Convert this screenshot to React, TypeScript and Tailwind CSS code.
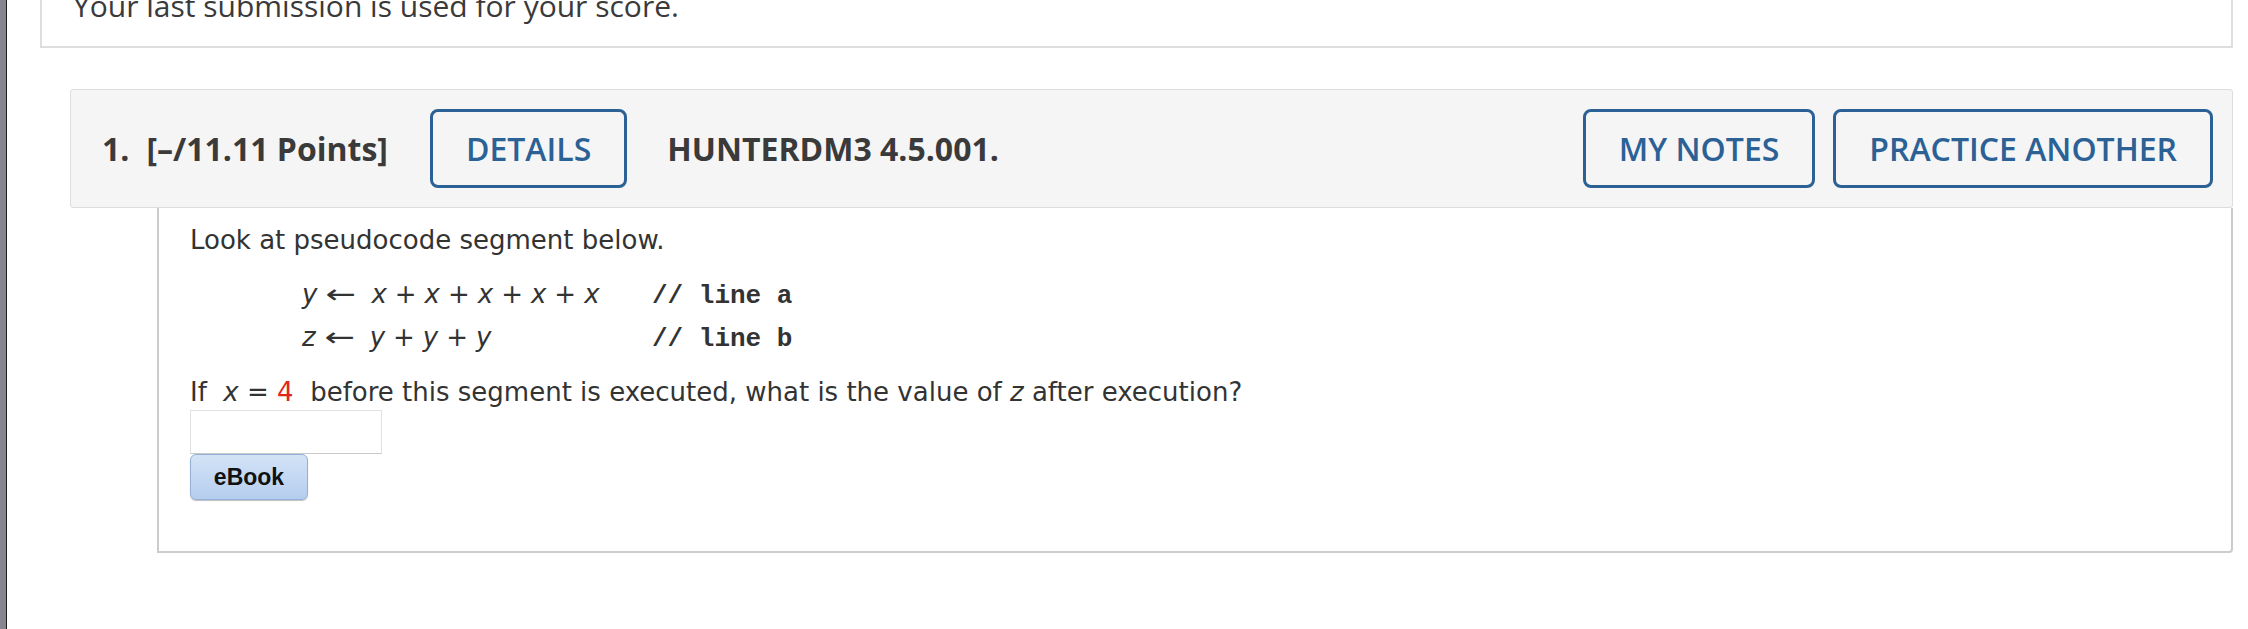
const sans = "font-['Open_Sans',sans-serif]"
const verdana = "font-['DejaVu_Sans','Verdana',sans-serif]"

function Var({ children }: { children: string }) {
  return <span className="italic">{children}</span>
}

function Op({ children }: { children: string }) {
  return <span className="mx-[8px]">{children}</span>
}

function Arrow() {
  return <span className="inline-block w-[34px] ml-[7px] mr-[13px] text-center scale-x-[1.4]">←</span>
}

function HeaderButton({ label }: { label: string }) {
  return (
    <button
      type="button"
      className="h-[79px] px-[33px] border-[3px] border-[#2b6195] rounded-[8px] text-[32px] font-semibold text-[#2b6195]"
    >
      {label}
    </button>
  )
}

export default function App() {
  return (
    <div className="flex min-h-[629px] bg-white overflow-hidden">
      <div className="w-[7px] shrink-0 bg-[#86868e] border-r border-[#1e1e1e]" />
      <div className="flex-1 min-w-0">
        <div className={`mt-[-30px] ml-[33px] mr-[15px] h-[78px] border-2 border-[#dedede] pl-[31px] pt-[14px] ${sans}`}>
          <p className="text-[30px] leading-[40px] text-[#3a3a3a]">Your last submission is used for your score.</p>
        </div>

        <div
          className={`mt-[41px] ml-[63px] mr-[15px] flex items-center bg-[#f5f5f5] border border-[#dddddd] rounded-[3px] pl-[31px] pr-[19px] py-[19px] ${sans}`}
        >
          <span className="text-[32px] font-bold text-[#3a3a3a]">1.</span>
          <span className="ml-[17px] text-[32px] font-bold text-[#3a3a3a]">[–/11.11 Points]</span>
          <div className="ml-[42px]">
            <HeaderButton label="DETAILS" />
          </div>
          <span className="ml-[40px] text-[32px] font-bold text-[#3a3a3a]">HUNTERDM3 4.5.001.</span>
          <div className="ml-auto flex gap-[18px]">
            <HeaderButton label="MY NOTES" />
            <HeaderButton label="PRACTICE ANOTHER" />
          </div>
        </div>

        <div
          className={`ml-[150px] mr-[15px] border-2 border-t-0 border-[#cccccc] rounded-br-[4px] pl-[31px] pt-[16px] pb-[51px] text-[26px] text-[#333333] ${verdana}`}
        >
          <p className="leading-[32px]">Look at pseudocode segment below.</p>

          <div className="mt-[18px] ml-[112px]">
            <div className="flex items-baseline leading-[41px]">
              <span className="w-[350px] shrink-0">
                <Var>y</Var>
                <Arrow />
                <Var>x</Var>
                <Op>+</Op>
                <Var>x</Var>
                <Op>+</Op>
                <Var>x</Var>
                <Op>+</Op>
                <Var>x</Var>
                <Op>+</Op>
                <Var>x</Var>
              </span>
              <span className="font-['Liberation_Mono',monospace] font-bold text-[26px] text-[#333333]">// line a</span>
            </div>
            <div className="flex items-baseline leading-[41px]">
              <span className="w-[350px] shrink-0">
                <Var>z</Var>
                <Arrow />
                <Var>y</Var>
                <Op>+</Op>
                <Var>y</Var>
                <Op>+</Op>
                <Var>y</Var>
              </span>
              <span className="font-['Liberation_Mono',monospace] font-bold text-[26px] text-[#333333]">// line b</span>
            </div>
          </div>

          <p className="mt-[16px] leading-[32px] whitespace-pre">
            If  <Var>x</Var> = <span className="text-[#e3261b]">4</span>  before this segment is executed, what is the value of{' '}
            <Var>z</Var> after execution?
          </p>

          <input
            type="text"
            className="block mt-[2px] w-[192px] h-[44px] border border-[#e2e2e2] border-b-[#c9c9c9] bg-white outline-none"
          />
          <button
            type="button"
            className="block w-[118px] h-[46px] rounded-[6px] border border-[#94b0d6] bg-gradient-to-b from-[#d3e3f7] to-[#b5cdee] shadow-[0_1px_1px_rgba(0,0,0,0.25)] font-['Liberation_Sans',Arial,sans-serif] font-bold text-[23px] text-[#111111]"
          >
            eBook
          </button>
        </div>
      </div>
    </div>
  )
}
